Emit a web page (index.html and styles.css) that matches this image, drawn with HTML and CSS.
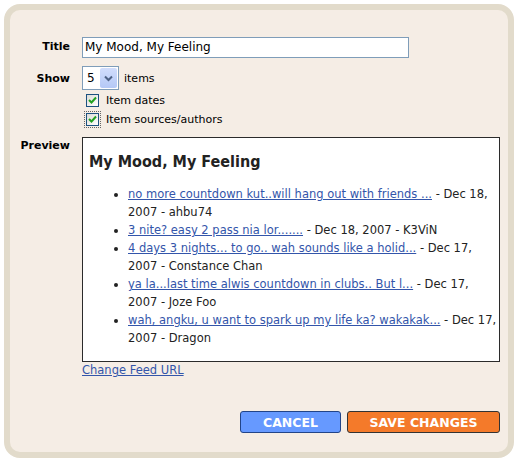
FILE: index.html
```html
<!DOCTYPE html>
<html>
<head>
<meta charset="utf-8">
<link rel="stylesheet" href="styles.css">
</head>
<body>
<div class="frame">
  <div class="form">
    <div class="label title-label">Title</div>
    <div class="field"><div class="input">My Mood, My Feeling</div></div>

    <div class="label show-label">Show</div>
    <div class="field show-field">
      <div class="showline">
        <div class="select"><span class="sel-val">5</span><span class="sel-btn"><svg width="9" height="7" viewBox="0 0 9 7"><path d="M1 1.5 L4.5 5 L8 1.5" fill="none" stroke="#4d6185" stroke-width="2"/></svg></span></div>
        <span class="items">items</span>
      </div>
      <div class="check"><span class="box"><svg width="9" height="9" viewBox="0 0 9 9"><path d="M1 4 L3.5 6.5 L8 1.5" fill="none" stroke="#21a121" stroke-width="2"/></svg></span><span>Item dates</span></div>
      <div class="check"><span class="box focus"><svg width="9" height="9" viewBox="0 0 9 9"><path d="M1 4 L3.5 6.5 L8 1.5" fill="none" stroke="#21a121" stroke-width="2"/></svg></span><span>Item sources/authors</span></div>
    </div>

    <div class="label preview-label">Preview</div>
    <div class="field">
      <div class="preview">
        <h2>My Mood, My Feeling</h2>
        <ul>
          <li><a href="#">no more countdown kut..will hang out with friends ...</a> - Dec 18,<br>2007 - ahbu74</li>
          <li><a href="#">3 nite? easy 2 pass nia lor.......</a> - Dec 18, 2007 - K3ViN</li>
          <li><a href="#">4 days 3 nights... to go.. wah sounds like a holid...</a> - Dec 17,<br>2007 - Constance Chan</li>
          <li><a href="#">ya la...last time alwis countdown in clubs.. But l...</a> - Dec 17,<br>2007 - Joze Foo</li>
          <li><a href="#">wah, angku, u want to spark up my life ka? wakakak...</a> - Dec 17,<br>2007 - Dragon</li>
        </ul>
      </div>
      <a class="change" href="#">Change Feed URL</a>
    </div>
  </div>
  <div class="buttons">
    <button class="btn cancel">CANCEL</button>
    <button class="btn save">SAVE CHANGES</button>
  </div>
</div>
</body>
</html>
```
FILE: styles.css
```css
html, body { margin: 0; padding: 0; background: #ffffff; }
body { width: 516px; height: 461px; overflow: hidden; }

.frame {
  box-sizing: border-box;
  margin: 4px 0 0 4px;
  width: 510px;
  height: 454px;
  border: 6px solid #e2dbcb;
  border-radius: 16px;
  background: #f5ede5;
  padding: 27px 8px 0 0;
  font-family: "DejaVu Sans", Verdana, sans-serif;
  color: #000;
}

.form {
  display: grid;
  grid-template-columns: 60px 1fr;
  column-gap: 12px;
  align-items: start;
}

.label {
  text-align: right;
  font-weight: bold;
  font-size: 11px;
  color: #000;
}
.title-label { padding-top: 3px; }
.show-label { padding-top: 6px; margin-top: 8px; }
.preview-label { padding-top: 2px; margin-top: 9px; }

.input {
  box-sizing: border-box;
  width: 327px;
  height: 21px;
  border: 1px solid #7f9db9;
  background: #fff;
  font-family: "DejaVu Sans", Tahoma, sans-serif;
  font-size: 12px;
  line-height: 19px;
  padding-left: 2px;
}

.show-field { margin-top: 8px; }
.showline { display: flex; align-items: center; gap: 5px; }
.select {
  box-sizing: border-box;
  width: 37px;
  height: 24px;
  border: 1px solid #7f9db9;
  background: #fff;
  display: flex;
  align-items: center;
  justify-content: space-between;
  padding: 2px 1px 2px 4px;
}
.sel-val { font-size: 12px; }
.sel-btn {
  width: 17px;
  height: 20px;
  background: linear-gradient(#d1ddfc, #b4c8f6);
  border-radius: 2px;
  display: flex;
  align-items: center;
  justify-content: center;
}
.items { font-size: 11px; }

.check {
  display: flex;
  align-items: center;
  gap: 7px;
  font-size: 11px;
  height: 18px;
  margin-left: 4px;
  padding-top: 1px;
}
.box {
  box-sizing: border-box;
  width: 13px;
  height: 13px;
  border: 1px solid #1c5180;
  background: linear-gradient(135deg, #dcdcd7, #ffffff);
  display: flex;
  align-items: center;
  justify-content: center;
}
.box.focus { outline: 1px dotted #666; outline-offset: 1px; }

.preview {
  box-sizing: border-box;
  margin-top: 9px;
  width: 418px;
  height: 225px;
  border: 1px solid #2b2b2b;
  background: #fff;
  padding: 13px 2px 0 6px;
  font-family: "DejaVu Sans", "Trebuchet MS", sans-serif;
}
.preview h2 {
  margin: 0 0 12px 0;
  font-family: "DejaVu Sans Condensed", "DejaVu Sans", sans-serif;
  font-size: 16px;
  font-weight: bold;
  color: #222;
  line-height: 22px;
}
.preview ul {
  margin: 0;
  padding-left: 39px;
  font-size: 11.5px;
  line-height: 18px;
  color: #222;
}
.preview li { margin: 0; white-space: nowrap; }
.preview a { color: #3355aa; text-decoration: underline; }

.change {
  display: block;
  width: fit-content;
  margin-top: 1px;
  font-size: 11.5px;
  line-height: 14px;
  color: #3355aa;
  text-decoration: underline;
  font-family: "DejaVu Sans", "Trebuchet MS", sans-serif;
}

.buttons {
  display: flex;
  justify-content: flex-end;
  gap: 6px;
  margin-top: 34px;
}
.btn {
  height: 22px;
  border-radius: 3px;
  font-family: "DejaVu Sans", "Trebuchet MS", sans-serif;
  font-weight: bold;
  font-size: 12.5px;
  color: #fff;
  padding: 0;
  cursor: pointer;
}
.cancel { width: 101px; background: #6699ff; border: 1px solid #224488; }
.save { width: 153px; background: #f47a2a; border: 1px solid #333; }
```
